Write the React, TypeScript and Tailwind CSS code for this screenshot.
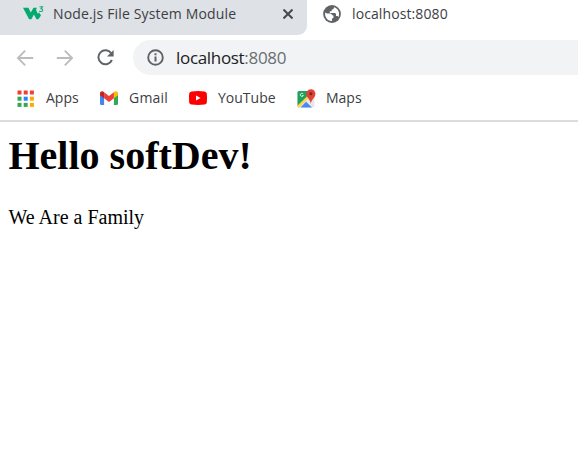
import React from "react";

const UI = "font-['Open_Sans','Noto_Sans',sans-serif] text-[#3c4043]";

function W3Icon() {
  return (
    <svg className="mt-px h-[16px] w-[22px] shrink-0" viewBox="0 0 22 16">
      <path d="M0 2.8H5.4L7.8 7.6L10.5 2.8H14L13 4.8L15 9L16 7.2L18 10.6L15.4 14.2H13.5L10.9 9.6L8.4 14.2H6.1Z" fill="#04aa6d" />
      <path d="M16.5 1.7H19.5L18 3.6C20.4 3.6 20.2 6.7 17.8 6.5Q16.9 6.5 16.3 5.8" fill="none" stroke="#19ad77" strokeWidth="1.1" />
    </svg>
  );
}

function GlobeIcon() {
  return (
    <svg className="h-[18px] w-[18px] shrink-0" viewBox="0 0 18 18">
      <circle cx="9" cy="9" r="8.9" fill="#5f6368" />
      <path d="M11 2.2C10.9 4 10.2 4.5 8.7 4.5V6.2H6.8V8H11.2C12.6 8 13 8.6 13 9.8V11H14.6L15.3 12.2C17.4 8.2 15.3 3.3 11 2.2ZM2.2 7.4C3.5 8.6 5 8.5 7 8.5C8.7 8.5 8.8 10.5 10.5 10.8V12.2C10.5 13.4 9 13 9 14V15.9C4.5 16.1 1.4 11.8 2.2 7.4Z" fill="white" />
    </svg>
  );
}

function Arrow({ forward = false }: { forward?: boolean }) {
  return (
    <svg className={forward ? "h-[18px] w-[18px] rotate-180" : "h-[18px] w-[18px]"} viewBox="0 0 18 18" fill="none" stroke="#babcbe" strokeWidth="1.8">
      <path d="M17.2 9H2M9.2 1.7L1.9 9L9.2 16.3" />
    </svg>
  );
}

function ReloadIcon() {
  return (
    <svg className="h-[18px] w-[18px]" viewBox="0 0 18 18">
      <path d="M15.2 4.3A7 7 0 1 0 15.9 11" fill="none" stroke="#5f6368" strokeWidth="2" />
      <path d="M17.6 1V7.6H11Z" fill="#5f6368" />
    </svg>
  );
}

function InfoIcon() {
  return (
    <svg className="h-[17px] w-[17px] shrink-0" viewBox="0 0 17 17">
      <circle cx="8.5" cy="8.5" r="7.3" fill="none" stroke="#5f6368" strokeWidth="1.9" />
      <path d="M7.5 7.5H9.5V12.5H7.5ZM7.5 4.3H9.5V6.2H7.5Z" fill="#5f6368" />
    </svg>
  );
}

function AppsIcon() {
  const colors = ["#ea4335", "#ea4335", "#ea4335", "#34a853", "#2684fc", "#fbaa05", "#34a853", "#34a853", "#fbaa05"];
  return (
    <svg className="h-[17px] w-[17px]" viewBox="0 0 17 17">
      {colors.map((c, i) => (
        <rect key={i} x={0.5 + (i % 3) * 6.2} y={0.5 + Math.floor(i / 3) * 6.2} width="4" height="4" fill={c} />
      ))}
    </svg>
  );
}

function GmailIcon() {
  return (
    <svg className="h-[14px] w-[18px]" viewBox="0 0 18 14">
      <path d="M0 3L4.1 5.5V14H1.4Q0 14 0 12.7Z" fill="#4285f4" />
      <path d="M18 3L13.9 5.5V14H16.6Q18 14 18 12.7Z" fill="#34a853" />
      <path d="M13.9 1.3C15.7-.5 18 .5 18 2.5V4.2L13.9 7.3Z" fill="#fbbc04" />
      <path d="M0 4.2V2.5C0 .5 2.3-.5 4.1 1.3V7.3Z" fill="#c5221f" />
      <path d="M4.1 1.3L9 5L13.9 1.3V7.3L9 11L4.1 7.3Z" fill="#ea4335" />
    </svg>
  );
}

function YouTubeIcon() {
  return (
    <svg className="h-[14px] w-[18px]" viewBox="0 0 18 14">
      <path d="M2.5.4Q9-.2 15.5.4Q17.5.6 17.8 2.6Q18.2 7 17.8 11.4Q17.5 13.4 15.5 13.6Q9 14.2 2.5 13.6Q.5 13.4 .2 11.4Q-.2 7 .2 2.6Q.5.6 2.5.4Z" fill="#f00" />
      <path d="M7 4.4V9.6L11.6 7Z" fill="white" />
    </svg>
  );
}

function MapsIcon() {
  return (
    <svg className="h-[19px] w-[19px]" viewBox="0 0 19 19">
      <rect x="0.5" y="2" width="17" height="16.5" rx="1.5" fill="#e5e7e9" />
      <path d="M2 2H13L14 5L1 17.5Q.5 17 .5 16.5V3.5Q.5 2 2 2Z" fill="#1fa15d" />
      <path d="M.5 16.5L10.5 7L12 8.5L2.5 18.5H2Q.5 18.5 .5 17Z" fill="#ffd54b" />
      <path d="M3.5 18.5L9 12.8L15 18.5Z" fill="#4989f5" />
      <path d="M6.2 4.9A1.6 1.6 0 1 0 6.4 6.5H5" fill="none" stroke="#d9eee2" strokeWidth="0.9" />
      <path d="M13.8 14.8C13.6 10.6 9.4 8.7 9.4 4.7A4.5 4.5 0 0 1 18.4 4.7C18.4 8.7 14.2 10.6 13.8 14.8Z" fill="#e34133" />
      <circle cx="13.9" cy="4.7" r="1.5" fill="#7f231d" />
    </svg>
  );
}

export default function App() {
  return (
    <div className="flex h-[451px] w-[578px] flex-col overflow-hidden bg-white">
      <header className={UI}>
        <div className="flex h-[35px]">
          <div className="flex h-[35px] w-[307px] items-start rounded-br-[9px] bg-[#dee1e6] pl-[23px] pt-[4px]">
            <W3Icon />
            <span className="ml-[8px] w-[184px] whitespace-nowrap text-[14px] leading-[19px] tracking-[0.16px]">Node.js File System Module</span>
            <svg className="ml-[46px] mt-[5px] h-[10px] w-[10px]" viewBox="0 0 10 10" stroke="#45484c" strokeWidth="2">
              <path d="M.5.5L9.5 9.5M9.5.5L.5 9.5" />
            </svg>
          </div>
          <div className="flex items-start pl-[16px] pt-[5px]">
            <GlobeIcon />
            <span className="-mt-px ml-[11px] text-[14px] leading-[19px] tracking-[0.1px]">localhost:8080</span>
          </div>
        </div>
        <div className="flex h-[45px] items-center pl-[16px]">
          <Arrow />
          <span className="w-[22px]" />
          <Arrow forward />
          <span className="w-[22px]" />
          <ReloadIcon />
          <div className="ml-[19px] flex h-[35px] flex-1 items-center rounded-l-full bg-[#f1f3f4] pl-[14px]">
            <InfoIcon />
            <span className="ml-[12px] text-[17px] leading-[24px] tracking-[-0.32px] text-[#202124]">
              localhost<span className="text-[#6b6f73]">:8080</span>
            </span>
          </div>
        </div>
        <nav className="flex h-[42px] items-center border-b-2 border-[#dadce0] pb-[4px] pl-[17px] text-[14px] leading-[20px]">
          <div className="flex w-[83px] items-center gap-[12px]"><AppsIcon /><span>Apps</span></div>
          <div className="flex w-[89px] items-center gap-[11px]"><GmailIcon /><span className="tracking-[0.2px]">Gmail</span></div>
          <div className="flex w-[108px] items-center gap-[11px]"><YouTubeIcon /><span>YouTube</span></div>
          <div className="flex items-center gap-[10px]"><MapsIcon /><span>Maps</span></div>
        </nav>
      </header>
      <main className="px-[8.5px] pt-[11px] font-['Liberation_Serif',serif] text-black">
        <h1 className="text-[40px] font-bold leading-[46px]">Hello softDev!</h1>
        <p className="mt-[27px] text-[20px] leading-[23px]">We Are a Family</p>
      </main>
    </div>
  );
}
